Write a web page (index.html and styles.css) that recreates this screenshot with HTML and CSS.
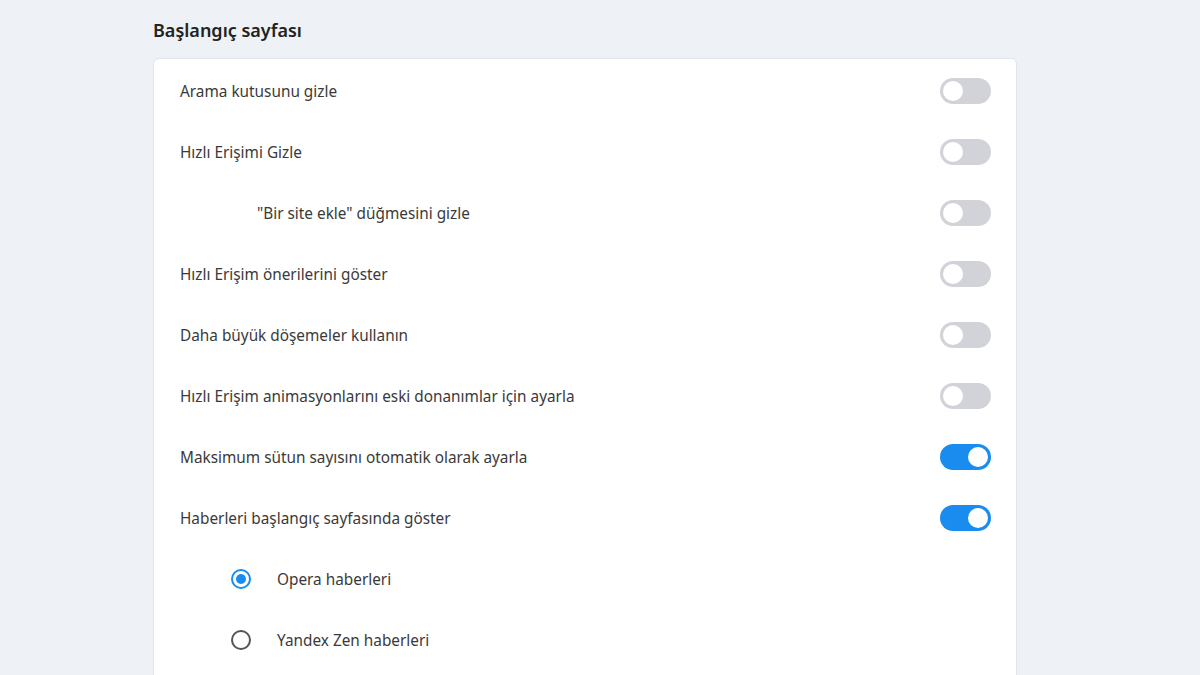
FILE: index.html
```html
<!DOCTYPE html>
<html lang="tr">
<head>
<meta charset="utf-8">
<link rel="stylesheet" href="styles.css">
</head>
<body>
<div class="page">
  <h2 class="section-title">Başlangıç sayfası</h2>
  <div class="card">
    <div class="row"><span class="label">Arama kutusunu gizle</span><span class="toggle"></span></div>
    <div class="row"><span class="label">Hızlı Erişimi Gizle</span><span class="toggle"></span></div>
    <div class="row sub"><span class="label">"Bir site ekle" düğmesini gizle</span><span class="toggle"></span></div>
    <div class="row"><span class="label">Hızlı Erişim önerilerini göster</span><span class="toggle"></span></div>
    <div class="row"><span class="label">Daha büyük döşemeler kullanın</span><span class="toggle"></span></div>
    <div class="row"><span class="label">Hızlı Erişim animasyonlarını eski donanımlar için ayarla</span><span class="toggle"></span></div>
    <div class="row"><span class="label">Maksimum sütun sayısını otomatik olarak ayarla</span><span class="toggle on"></span></div>
    <div class="row"><span class="label">Haberleri başlangıç sayfasında göster</span><span class="toggle on"></span></div>
    <div class="row radio-row"><span class="radio checked"></span><span class="label">Opera haberleri</span></div>
    <div class="row radio-row"><span class="radio"></span><span class="label">Yandex Zen haberleri</span></div>
  </div>
</div>
</body>
</html>
```

FILE: styles.css
```css
html, body {
  margin: 0;
  padding: 0;
  background: #eef2f6;
  font-family: "Noto Sans", "Open Sans", sans-serif;
  color: #333;
}
.page {
  width: 864px;
  height: 675px;
  box-sizing: border-box;
  overflow: hidden;
  margin: 0 0 0 153px;
  padding-top: 18px;
}
.section-title {
  margin: 0 0 16px 0;
  font-size: 18px;
  font-weight: 600;
  line-height: 24px;
  color: #222;
}
.card {
  background: #fff;
  border: 1px solid #e1e5ea;
  border-radius: 6px;
  padding: 1px 25px 40px 26px;
}
.row {
  height: 61px;
  display: flex;
  align-items: center;
  justify-content: space-between;
}
.label {
  font-size: 15.35px;
  color: #3a3a3a;
}
.row.sub .label {
  padding-left: 77px;
}
.toggle {
  width: 51px;
  height: 26px;
  border-radius: 13px;
  background: #d2d2d9;
  position: relative;
  flex: none;
}
.toggle::after {
  content: "";
  position: absolute;
  top: 3px;
  left: 3px;
  width: 20px;
  height: 20px;
  border-radius: 50%;
  background: #fff;
}
.toggle.on {
  background: #1a8cf0;
}
.toggle.on::after {
  left: 28px;
}
.radio-row {
  justify-content: flex-start;
  padding-left: 51px;
}
.radio {
  width: 16px;
  height: 16px;
  border: 2px solid #555;
  border-radius: 50%;
  box-sizing: content-box;
  margin-right: 26px;
  position: relative;
  flex: none;
}
.radio.checked {
  border-color: #1a8cf0;
}
.radio.checked::after {
  content: "";
  position: absolute;
  top: 3px;
  left: 3px;
  width: 10px;
  height: 10px;
  border-radius: 50%;
  background: #1a8cf0;
}
```
